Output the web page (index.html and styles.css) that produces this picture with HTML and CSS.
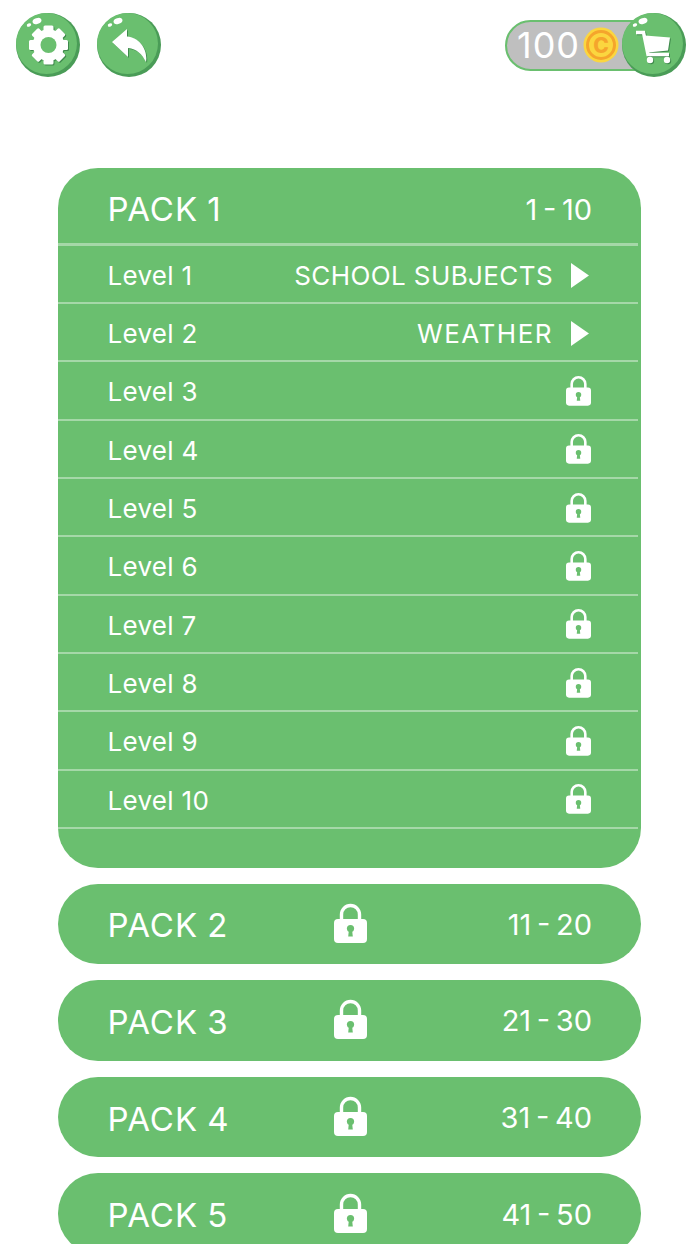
FILE: index.html
```html
<!DOCTYPE html>
<html lang="en">
<head>
<meta charset="utf-8">
<title>Levels</title>
<link rel="stylesheet" href="styles.css">
</head>
<body>
<svg class="defs" width="0" height="0" aria-hidden="true">
  <symbol id="ball" viewBox="0 0 64 64">
    <circle cx="32" cy="32" r="32" fill="#4a9c57"/>
    <circle cx="30.5" cy="30.5" r="30.5" fill="#6abf6f"/>
    <ellipse cx="21" cy="8" rx="4.6" ry="2.9" fill="#fff" transform="rotate(-20 21 8)"/>
    <ellipse cx="13" cy="12" rx="2.3" ry="1.6" fill="#fff" transform="rotate(-25 13 12)"/>
  </symbol>
  <symbol id="lock" viewBox="0 0 33 40">
    <path d="M7.5 18V11.5a9 9 0 0 1 18 0V18" fill="none" stroke="#fff" stroke-width="3.4"/>
    <rect x="0" y="16" width="33" height="24" rx="4" fill="#fff"/>
    <circle cx="16.5" cy="25.5" r="3.6" fill="#6abf6f"/>
    <path d="M15 26h3l.8 7.5h-4.6z" fill="#6abf6f"/>
  </symbol>
  <symbol id="play" viewBox="0 0 18 25">
    <path d="M0 0L18 12.5L0 25Z" fill="#fff"/>
  </symbol>
</svg>

<header class="topbar">
  <div class="topbar-left">
    <button class="ball" type="button" aria-label="Settings">
      <svg class="ball-bg"><use href="#ball"/></svg>
      <svg class="ball-icon" viewBox="0 0 64 64">
        <g fill="#fff">
          <rect x="27.500" y="12.500" width="10" height="39" rx="1.500"/>
          <rect x="27.500" y="12.500" width="10" height="39" rx="1.500" transform="rotate(45 32.500 32)"/>
          <rect x="27.500" y="12.500" width="10" height="39" rx="1.500" transform="rotate(90 32.500 32)"/>
          <rect x="27.500" y="12.500" width="10" height="39" rx="1.500" transform="rotate(135 32.500 32)"/>
        </g>
        <circle cx="32.500" cy="32" r="12" fill="none" stroke="#fff" stroke-width="7.500"/>
        <circle cx="32.500" cy="32" r="8" fill="#6abf6f"/>
      </svg>
    </button>
    <button class="ball" type="button" aria-label="Back">
      <svg class="ball-bg"><use href="#ball"/></svg>
      <svg class="ball-icon" viewBox="0 0 64 64">
        <path d="M15 29L30 16V23.500C43 24.500 51 37 49 49C45 41 40 36 31 35V44Z" fill="#fff"/>
      </svg>
    </button>
  </div>
  <div class="wallet">
    <div class="coins">
      <span class="coins-value">100</span>
      <svg class="coin" viewBox="0 0 36 36">
        <circle cx="18" cy="18" r="17.500" fill="#fbd63f"/>
        <circle cx="18" cy="18" r="13.500" fill="#fbd63f" stroke="#f5a52c" stroke-width="3"/>
        <text x="18" y="25.500" class="coin-letter">C</text>
      </svg>
    </div>
    <button class="ball ball-over" type="button" aria-label="Shop">
      <svg class="ball-bg"><use href="#ball"/></svg>
      <svg class="ball-icon" viewBox="0 0 64 64">
        <path d="M14 19.500H21.500L26 41.500H47" fill="none" stroke="#fff" stroke-width="3.500"/>
        <path d="M23 22.500L48 24.500L46 37.500L26 39.500Z" fill="#fff"/>
        <circle cx="28" cy="47" r="3.200" fill="#fff"/>
        <circle cx="45" cy="47" r="3.200" fill="#fff"/>
      </svg>
    </button>
  </div>
</header>

<main class="packs">
  <section class="pack-open">
    <div class="pack-head">
      <span class="pack-name">PACK 1</span>
      <span class="pack-range">1 - 10</span>
    </div>
    <div class="row"><span>Level 1</span><span class="row-end">SCHOOL SUBJECTS<svg class="play"><use href="#play"/></svg></span></div>
    <div class="row"><span>Level 2</span><span class="row-end row-end-wide">WEATHER<svg class="play"><use href="#play"/></svg></span></div>
    <div class="row"><span>Level 3</span><svg class="lock-sm"><use href="#lock"/></svg></div>
    <div class="row"><span>Level 4</span><svg class="lock-sm"><use href="#lock"/></svg></div>
    <div class="row"><span>Level 5</span><svg class="lock-sm"><use href="#lock"/></svg></div>
    <div class="row"><span>Level 6</span><svg class="lock-sm"><use href="#lock"/></svg></div>
    <div class="row"><span>Level 7</span><svg class="lock-sm"><use href="#lock"/></svg></div>
    <div class="row"><span>Level 8</span><svg class="lock-sm"><use href="#lock"/></svg></div>
    <div class="row"><span>Level 9</span><svg class="lock-sm"><use href="#lock"/></svg></div>
    <div class="row"><span>Level 10</span><svg class="lock-sm"><use href="#lock"/></svg></div>
  </section>
  <section class="pack-closed"><span class="pack-name">PACK 2</span><svg class="lock-lg"><use href="#lock"/></svg><span class="pack-range">11 - 20</span></section>
  <section class="pack-closed"><span class="pack-name">PACK 3</span><svg class="lock-lg"><use href="#lock"/></svg><span class="pack-range">21 - 30</span></section>
  <section class="pack-closed"><span class="pack-name">PACK 4</span><svg class="lock-lg"><use href="#lock"/></svg><span class="pack-range">31 - 40</span></section>
  <section class="pack-closed"><span class="pack-name">PACK 5</span><svg class="lock-lg"><use href="#lock"/></svg><span class="pack-range">41 - 50</span></section>
</main>
</body>
</html>
```
FILE: styles.css
```css
* { box-sizing: border-box; }
html, body { margin: 0; height: 1244px; overflow: hidden; background: #fff; }
body { font-family: Inter, "Noto Sans", sans-serif; color: #fff; }
.defs { position: absolute; }

.topbar {
  display: flex;
  justify-content: space-between;
  padding: 13px 14px 0 16px;
  height: 77px;
}
.topbar-left { display: flex; gap: 17px; }

.ball {
  position: relative;
  display: block;
  width: 64px;
  height: 64px;
  padding: 0;
  border: 0;
  background: none;
}
.ball-bg, .ball-icon { position: absolute; left: 0; top: 0; width: 64px; height: 64px; }
.ball-icon { filter: drop-shadow(1px 1.5px 0 #3f8a4c); }

.wallet { position: relative; display: flex; align-items: center; width: 181px; height: 64px; }
.ball-over { position: absolute; right: 0; top: 0; }
.coins {
  display: flex;
  align-items: center;
  gap: 3px;
  width: 155px;
  height: 51px;
  padding-left: 10px;
  background: #bfbfbf;
  border: 2px solid #6abf6f;
  border-radius: 26px;
}
.coins-value { font-size: 36px; font-weight: 400; letter-spacing: 1px; }
.coin { width: 36px; height: 36px; flex: none; }
.coin-letter { font-size: 21px; font-weight: 800; fill: #f5a52c; text-anchor: middle; }

.packs { display: flex; flex-direction: column; gap: 16.2px; width: 583px; margin: 91px 0 0 58px; }

.pack-open { height: 699.5px; background: #6abf6f; border-radius: 40px; }
.pack-head {
  display: flex;
  justify-content: space-between;
  align-items: center;
  width: 580px;
  height: 77.5px;
  padding: 8px 46px 0 49.5px;
  border-bottom: 3px solid rgba(255, 255, 255, 0.4);
}
.pack-name { font-size: 33px; font-weight: 400; letter-spacing: 1px; word-spacing: -1px; }
.pack-range { font-size: 29px; font-weight: 400; word-spacing: -2.5px; }

.row {
  display: flex;
  justify-content: space-between;
  align-items: center;
  width: 580px;
  height: 58.35px;
  padding: 3px 47px 0 49.5px;
  border-bottom: 2px solid rgba(255, 255, 255, 0.4);
  font-size: 26px;
  letter-spacing: 0.3px;
}
.row-end { display: flex; align-items: center; gap: 18px; margin-right: 2px; letter-spacing: 0.4px; }
.row-end-wide { letter-spacing: 1.5px; }
.play { width: 18px; height: 25px; flex: none; }
.lock-sm { width: 25px; height: 31px; flex: none; margin-top: -3px; }
.lock-lg { width: 33px; height: 40px; justify-self: center; margin: -2px 0 0 2px; }

.pack-closed {
  display: grid;
  grid-template-columns: 1fr auto 1fr;
  align-items: center;
  flex: none;
  height: 80.4px;
  padding: 0 49px 0 49.5px;
  background: #6abf6f;
  border-radius: 40px;
}
.pack-closed .pack-name { padding-top: 3px; }
.pack-closed .pack-range { justify-self: end; padding-top: 1px; }
```
